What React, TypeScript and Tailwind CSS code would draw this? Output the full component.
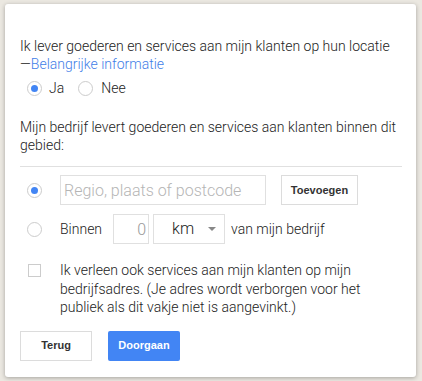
import { useState } from 'react';

const Radio = ({ checked, onClick }: { checked: boolean; onClick?: () => void }) => (
  <button
    type="button"
    onClick={onClick}
    className="w-[15px] h-[15px] rounded-full border border-[#cccccc] bg-white flex items-center justify-center shrink-0"
  >
    {checked && <span className="w-[7px] h-[7px] rounded-full bg-[#4285f4]" />}
  </button>
);

const App = () => {
  const [serve, setServe] = useState(true);
  const [mode, setMode] = useState<'regio' | 'radius'>('regio');
  const [checked, setChecked] = useState(false);

  return (
    <div className="w-[422px] h-[381px] bg-[#ebe8e1] pt-[4px] pl-[5px] font-['Roboto',sans-serif] font-light text-[14px] text-[#222]">
      {/* Dialog */}
      <div className="w-[411px] h-[373px] bg-white rounded-[3px] shadow-[0_1px_4px_rgba(0,0,0,0.3)] pt-[33px] pl-[15px] pr-[14px] flex flex-col">
        <p className="leading-[18px]">
          Ik lever goederen en services aan mijn klanten op hun locatie
          <br />
          —<a href="#" className="text-[#3f7ee8]">Belangrijke informatie</a>
        </p>

        <div className="flex items-center mt-[6px] pl-[7px] h-[18px]">
          <Radio checked={serve} onClick={() => setServe(true)} />
          <span className="ml-[7px]">Ja</span>
          <span className="ml-[14px]">
            <Radio checked={!serve} onClick={() => setServe(false)} />
          </span>
          <span className="ml-[8px]">Nee</span>
        </div>

        <p className="leading-[18px] mt-[21px]">
          Mijn bedrijf levert goederen en services aan klanten binnen dit gebied:
        </p>

        <div className="h-px bg-[#e0e0e0] mt-[12px]" />

        {/* Regio row */}
        <div className="flex items-center mt-[8px] h-[30px]">
          <span className="w-[40px] pl-[7px] shrink-0">
            <Radio checked={mode === 'regio'} onClick={() => setMode('regio')} />
          </span>
          <input
            placeholder="Regio, plaats of postcode"
            className="w-[206px] h-[30px] border border-[#e0e0e0] pl-[3px] pr-[6px] text-[16px] font-light outline-none placeholder:text-[#b5b5b5]"
          />
          <button
            type="button"
            className="ml-[15px] w-[77px] h-[30px] border border-[#dcdcdc] font-['Liberation_Sans',sans-serif] font-bold text-[11px] text-[#333]"
          >
            Toevoegen
          </button>
        </div>

        {/* Radius row */}
        <div className="flex items-center mt-[9px] h-[30px]">
          <span className="w-[40px] pl-[7px] shrink-0">
            <Radio checked={mode === 'radius'} onClick={() => setMode('radius')} />
          </span>
          <span>Binnen</span>
          <input
            defaultValue="0"
            className="ml-[11px] w-[36px] h-[30px] border border-[#e0e0e0] px-[2px] text-right text-[16px] font-light text-[#999] outline-none"
          />
          <div className="ml-[4px] w-[72px] h-[30px] border border-[#e0e0e0] flex items-center pl-[18px] pr-[6px]">
            <span className="text-[16px]">km</span>
            <svg className="ml-auto mr-[2px]" width="8" height="4" viewBox="0 0 8 4">
              <path d="M0 0h8L4 4z" fill="#888" />
            </svg>
          </div>
          <span className="ml-[6px]">van mijn bedrijf</span>
        </div>

        {/* Checkbox */}
        <div className="flex mt-[17px] pr-[20px]">
          <span className="w-[40px] pl-[8px] pt-[3px] shrink-0">
            <button
              type="button"
              onClick={() => setChecked(!checked)}
              className="block w-[13px] h-[13px] border border-[#cccccc] bg-white"
            />
          </span>
          <p className="leading-[18.5px]">
            Ik verleen ook services aan mijn klanten op mijn bedrijfsadres. (Je adres wordt verborgen voor het publiek als dit vakje niet is aangevinkt.)
          </p>
        </div>

        {/* Actions */}
        <div className="flex gap-[16px] mt-[14px] font-['Liberation_Sans',sans-serif] font-bold text-[11px]">
          <button type="button" className="w-[72px] h-[30px] border border-[#dcdcdc] text-[#333] bg-white">
            Terug
          </button>
          <button type="button" className="w-[72px] h-[30px] rounded-[2px] bg-[#4285f4] text-white">
            Doorgaan
          </button>
        </div>
      </div>
    </div>
  );
};

export default App;
